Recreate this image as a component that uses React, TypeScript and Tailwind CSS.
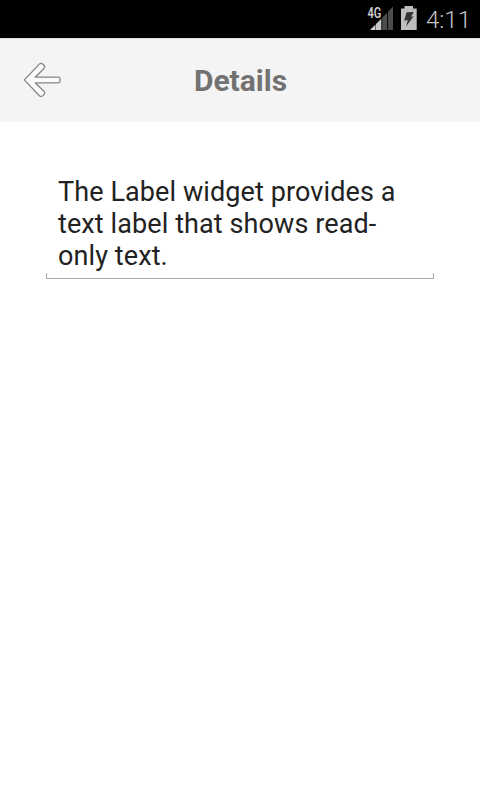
function StatusBar() {
  return (
    <div className="flex h-[38px] items-start justify-end bg-black font-[Roboto,sans-serif]">
      <svg className="h-[38px] w-[110px] overflow-visible" viewBox="0 0 110 38">
        <path d="M0 30 L5.5 24.5 V30 Z" fill="#d0d0d0" />
        <path d="M6 24 L11.3 18.7 V30 H6 Z" fill="#c8c8c8" />
        <path d="M12.2 17.8 L17.2 12.8 V30 H12.2 Z" fill="#4c4c4c" />
        <path d="M18.1 11.5 L23 6.5 V30 H18.1 Z" fill="#4c4c4c" />
        <text x="-2.6" y="17.8" fontSize="14.5" fontWeight="600" fill="#cccccc" textLength="13.8" lengthAdjust="spacingAndGlyphs">4G</text>
        <path d="M34.5 6 H43 V8.5 H46.7 V30 H31 V8.5 H34.5 Z" fill="#bebebe" />
        <path d="M36.5 12.3 L43.8 12 L41 16.8 L43.7 16.2 L36 26.6 L37.8 20 L34.2 20.8 Z" fill="#333" />
        <text x="56" y="28" fontSize="24" fontWeight="300" fill="#c4c4c4" textLength="45">4:11</text>
      </svg>
    </div>
  );
}

function Header() {
  return (
    <header className="grid h-[84px] grid-cols-[80px_1fr_80px] items-center border-t border-[#dedede] bg-[#f4f4f4] pb-px">
      <button aria-label="Back" className="ml-[23px] h-9 w-10">
        <svg className="h-9 w-10" viewBox="0 0 40 36" fill="#fbfbfb" stroke="#858585" strokeWidth="1.3" strokeLinejoin="round">
          <path d="M1.3 17.9 L16.4 2.1 Q18.2 .6 19.9 2.2 L21 3.3 Q22.4 4.9 20.9 6.5 L12.2 15.2 H35.3 Q37 15.2 37 16.8 V19 Q37 20.8 35.3 20.8 H12.2 L20.9 29.3 Q22.4 30.9 21 32.5 L19.9 33.6 Q18.2 35.2 16.4 33.7 Z" />
        </svg>
      </button>
      <h1 className="pt-0.5 pl-px text-center text-[30px] leading-9 font-bold text-[#727272]">Details</h1>
    </header>
  );
}

export default function App() {
  return (
    <div className="h-[800px] w-[480px] overflow-hidden bg-white font-[Roboto,sans-serif]">
      <StatusBar />
      <Header />
      <main className="px-[46px] pt-[54px]">
        <p className="px-3 text-[27px] leading-8 tracking-[0.1px] text-[#222]">
          The Label widget provides a<br />text label that shows read-<br />only text.
        </p>
        <div className="mt-px h-[6px] border-x border-b border-[#aeaeae]" />
      </main>
    </div>
  );
}
